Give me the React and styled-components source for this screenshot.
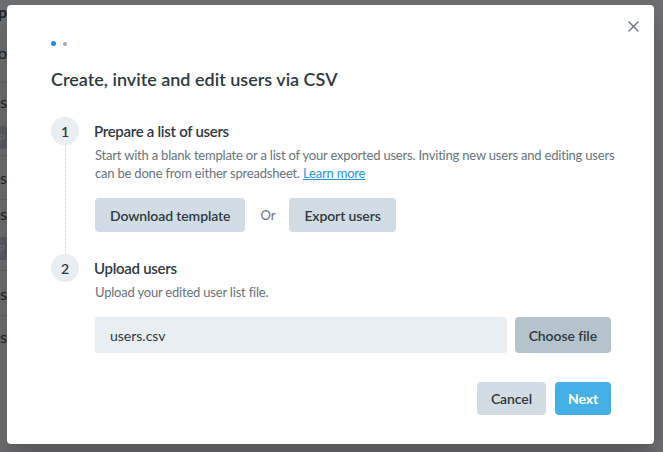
import React from 'react';
import styled, { createGlobalStyle } from 'styled-components';

const GlobalStyle = createGlobalStyle`
  html, body { margin: 0; padding: 0; }
  body {
    width: 663px;
    height: 452px;
    overflow: hidden;
    font-family: Lato, "Noto Sans", sans-serif;
    color: #2f3941;
  }
`;

const Page = styled.div`
  position: relative;
  width: 663px;
  height: 452px;
  background: #fff;
  overflow: hidden;
`;

const PageList = styled.div`
  width: 7px;
  display: flex;
  flex-direction: column;
  overflow: hidden;
`;

const PageRow = styled.div`
  height: ${(p) => p.h}px;
  display: flex;
  align-items: center;
  justify-content: flex-end;
  border-bottom: ${(p) => (p.line ? '1px solid #e4e8eb' : 'none')};
  font-size: 16px;
  font-weight: ${(p) => (p.bold ? 700 : 400)};
  color: #1f2327;
  white-space: nowrap;
`;

const Badge = styled.span`
  display: flex;
  align-items: center;
  justify-content: flex-end;
  height: 23px;
  padding-right: 2px;
  background: #c6ccd2;
  color: #fff;
  font-size: 11px;
  font-weight: 700;
  border-radius: 3px;
`;

const Overlay = styled.div`
  position: absolute;
  inset: 0;
  background: rgba(30, 33, 36, 0.65);
`;

const Modal = styled.div`
  position: absolute;
  left: 7px;
  top: 5px;
  width: 647px;
  height: 439px;
  box-sizing: border-box;
  padding: 36px 43px 29px 44px;
  background: #fff;
  border-radius: 4px;
  box-shadow: 0 16px 24px rgba(0, 0, 0, 0.2);
  display: flex;
  flex-direction: column;
`;

const Close = styled.button`
  position: absolute;
  top: 9px;
  right: 9px;
  width: 24px;
  height: 24px;
  padding: 0;
  border: 0;
  background: none;
  display: flex;
  align-items: center;
  justify-content: center;
  cursor: pointer;
`;

const Dots = styled.div`
  display: flex;
  gap: 7px;
  height: 5px;
  align-items: center;
`;

const Dot = styled.span`
  width: ${(p) => (p.active ? 5 : 4)}px;
  height: ${(p) => (p.active ? 5 : 4)}px;
  border-radius: 50%;
  background: ${(p) => (p.active ? '#1f8ee0' : '#9eabb6')};
`;

const Title = styled.h2`
  margin: 21px 0 26px;
  font-size: 18px;
  line-height: 24px;
  font-weight: 600;
  color: #2f3941;
`;

const Step = styled.div`
  display: flex;
  gap: 15px;
`;

const Marker = styled.div`
  width: 28px;
  display: flex;
  flex-direction: column;
  align-items: center;
`;

const Circle = styled.div`
  width: 28px;
  height: 28px;
  border-radius: 50%;
  background: #e9eef2;
  display: flex;
  align-items: center;
  justify-content: center;
  font-size: 14px;
  font-weight: 600;
  color: #2f3941;
  flex-shrink: 0;
`;

const Rail = styled.div`
  flex: 1;
  border-left: 1px dotted #c2c8cc;
`;

const Content = styled.div`
  flex: 1;
  padding-bottom: ${(p) => p.pb || 0}px;
`;

const StepTitle = styled.div`
  height: 28px;
  display: flex;
  align-items: center;
  font-size: 15px;
  letter-spacing: -0.3px;
  font-weight: 600;
  color: #2f3941;
`;

const Desc = styled.p`
  margin: 1px -8px 0 1px;
  font-size: 13px;
  letter-spacing: -0.2px;
  line-height: 18px;
  color: #68737d;
`;

const Link = styled.a`
  color: #1f95e0;
  text-decoration: underline;
  cursor: pointer;
`;

const Actions = styled.div`
  display: flex;
  align-items: center;
  margin: 16px 0 0 1px;
`;

const Button = styled.button`
  height: ${(p) => p.h || 34}px;
  padding: 0 ${(p) => p.px || 15}px;
  border: 0;
  border-radius: 4px;
  background: ${(p) => (p.primary ? '#45b0e6' : p.dark ? '#b5c3cd' : '#d1dce4')};
  color: ${(p) => (p.primary ? '#fff' : '#2f3941')};
  font-family: inherit;
  font-size: 14px;
  font-weight: ${(p) => (p.primary ? 700 : 600)};
  letter-spacing: -0.1px;
  white-space: nowrap;
  cursor: pointer;
`;

const Or = styled.span`
  margin: 0 14px 0 15px;
  font-size: 13px;
  color: #68737d;
`;

const FileRow = styled.div`
  display: flex;
  gap: 8px;
  margin: 16px 0 0 1px;
`;

const FileInput = styled.div`
  flex: 1;
  height: 36px;
  display: flex;
  align-items: center;
  padding-left: 15px;
  border-radius: 3px;
  background: #e9eef2;
  font-size: 14px;
  color: #2f3941;
`;

const Footer = styled.div`
  margin-top: auto;
  display: flex;
  justify-content: flex-end;
  gap: 9px;
`;

export default function App() {
  return (
    <Page>
      <GlobalStyle />
      <PageList>
        <PageRow h={22} bold>Setup</PageRow>
        <PageRow h={60} line>Info</PageRow>
        <PageRow h={36}>Details</PageRow>
        <PageRow h={36} line><Badge>P</Badge></PageRow>
        <PageRow h={43} line>Details</PageRow>
        <PageRow h={27}>Details</PageRow>
        <PageRow h={43} line><Badge>P</Badge></PageRow>
        <PageRow h={44} line>Details</PageRow>
        <PageRow h={40}>Details</PageRow>
      </PageList>
      <Overlay />
      <Modal>
        <Close aria-label="Close">
          <svg width="11" height="11" viewBox="0 0 11 11">
            <path d="M1 1l9 9M10 1l-9 9" stroke="#68737d" strokeWidth="1.4" strokeLinecap="round" />
          </svg>
        </Close>
        <Dots>
          <Dot active />
          <Dot />
        </Dots>
        <Title>Create, invite and edit users via CSV</Title>
        <Step>
          <Marker>
            <Circle>1</Circle>
            <Rail />
          </Marker>
          <Content pb={22}>
            <StepTitle>Prepare a list of users</StepTitle>
            <Desc>
              Start with a blank template or a list of your exported users. Inviting new users and editing users
              can be done from either spreadsheet. <Link>Learn more</Link>
            </Desc>
            <Actions>
              <Button>Download template</Button>
              <Or>Or</Or>
              <Button>Export users</Button>
            </Actions>
          </Content>
        </Step>
        <Step>
          <Marker>
            <Circle>2</Circle>
          </Marker>
          <Content>
            <StepTitle>Upload users</StepTitle>
            <Desc>Upload your edited user list file.</Desc>
            <FileRow>
              <FileInput>users.csv</FileInput>
              <Button dark h={36} px={14}>Choose file</Button>
            </FileRow>
          </Content>
        </Step>
        <Footer>
          <Button h={33} px={14}>Cancel</Button>
          <Button primary h={33} px={13}>Next</Button>
        </Footer>
      </Modal>
    </Page>
  );
}
